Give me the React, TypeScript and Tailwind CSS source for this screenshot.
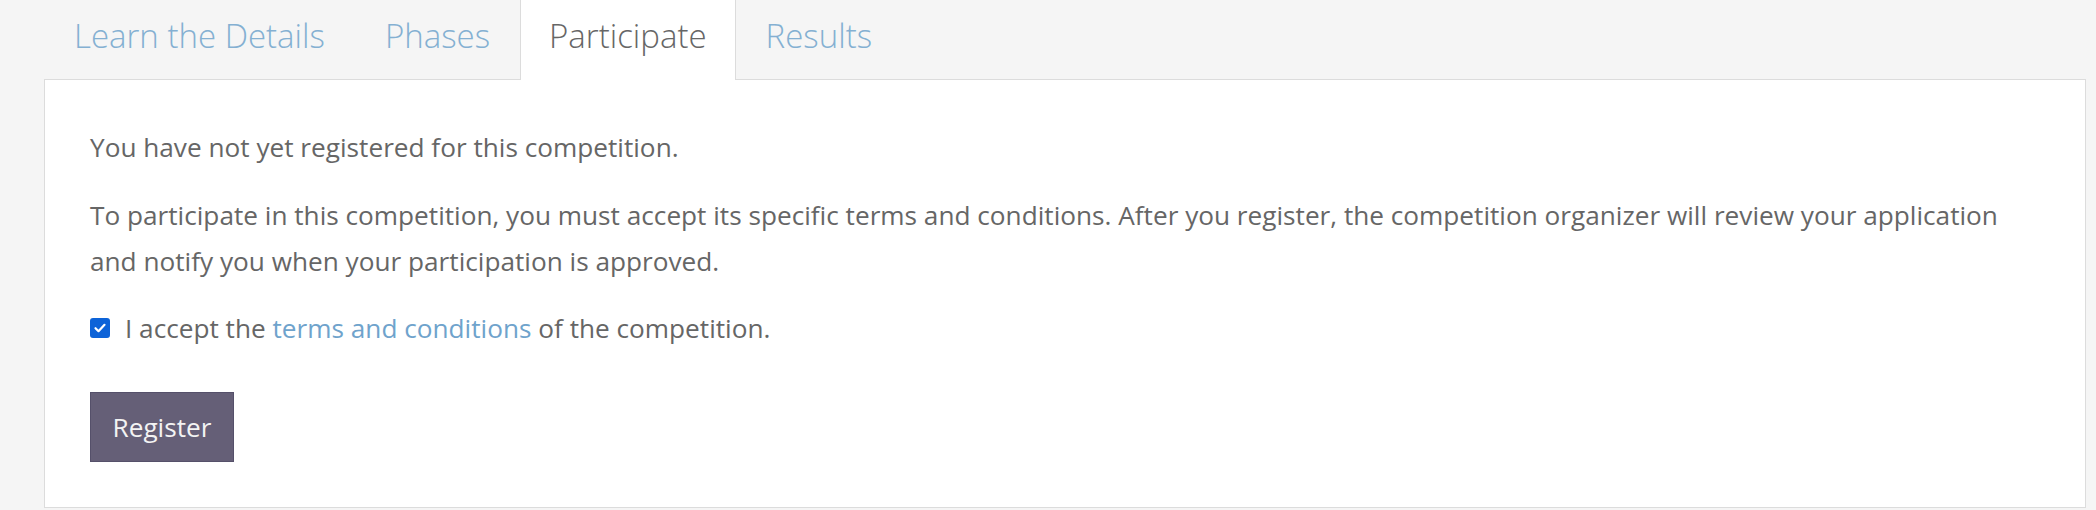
import { useState } from 'react';

const tabs = ['Learn the Details', 'Phases', 'Participate', 'Results'];

export default function App() {
  const [active, setActive] = useState('Participate');
  const [accepted, setAccepted] = useState(true);

  return (
    <div className="min-h-[510px] bg-[#f5f5f5] pl-[44px] pr-[10px] font-['Open_Sans',sans-serif]">
      {/* Tabs */}
      <ul className="flex h-[80px] border-b border-[#dcdcdc]">
        {tabs.map(tab => (
          <li key={tab} className="-mb-px">
            <button
              onClick={() => setActive(tab)}
              className={
                tab === active
                  ? 'h-[80px] px-[28px] pb-[8px] text-[33px] font-light text-[#666] bg-white border-x border-[#dcdcdc]'
                  : 'h-[80px] px-[29px] pb-[8px] text-[33px] font-light text-[#84b0d2] border-x border-transparent'
              }
            >
              {tab}
            </button>
          </li>
        ))}
      </ul>

      {/* Panel */}
      <div className="h-[428px] bg-white border-x border-b border-[#dcdcdc] pl-[45px] pr-[60px] pt-[44px] text-[26.2px] leading-[46px] text-[#666]">
        <p>You have not yet registered for this competition.</p>
        <p className="mt-[22px]">
          To participate in this competition, you must accept its specific terms and conditions. After you register, the competition organizer will review your application and notify you when your participation is approved.
        </p>

        <label className="mt-[21px] flex items-center gap-[15px]">
          <span
            onClick={() => setAccepted(a => !a)}
            className={
              accepted
                ? 'flex h-[20px] w-[20px] items-center justify-center rounded-[3px] bg-[#0d63d8]'
                : 'flex h-[20px] w-[20px] items-center justify-center rounded-[3px] border border-[#767676] bg-white'
            }
          >
            {accepted && (
              <svg width="14" height="14" viewBox="0 0 14 14" fill="none">
                <path d="M2.5 7.2l3 3 6-6.4" stroke="white" strokeWidth="2.2" strokeLinecap="round" strokeLinejoin="round" />
              </svg>
            )}
          </span>
          <span>
            I accept the <a href="#" className="text-[#6fa3cc]">terms and conditions</a> of the competition.
          </span>
        </label>

        <button className="mt-[41px] h-[70px] w-[144px] border border-[#55506a] bg-[#655f77] text-[#f3f3f3]">
          Register
        </button>
      </div>
    </div>
  );
}
